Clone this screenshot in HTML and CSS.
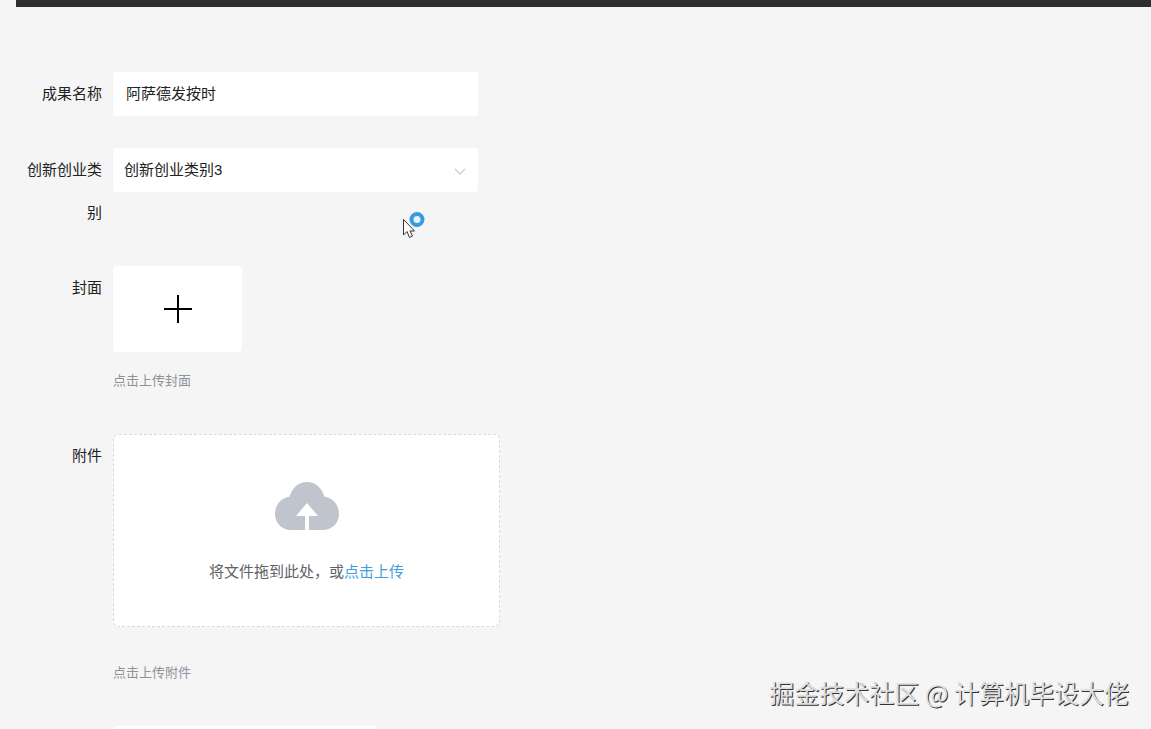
FILE: index.html
```
<!DOCTYPE html>
<html lang="zh-CN">
<head>
    <meta charset="utf-8">
    <title>成果名称</title>
    <link rel="stylesheet" href="styles.css">
</head>
<body>
    <div class="top-bar"></div>

    <form class="edit-form">
        <div class="form-item">
            <label class="form-label" for="name">成果名称</label>
            <div class="form-content">
                <input class="text-input" type="text" id="name" value="阿萨德发按时">
            </div>
        </div>

        <div class="form-item">
            <label class="form-label" for="type">创新创业类别</label>
            <div class="form-content">
                <div class="select-box">
                    <select id="type">
                        <option>创新创业类别3</option>
                    </select>
                    <svg class="select-arrow" width="12" height="8" viewBox="0 0 12 8">
                        <path d="M1 1l5 5 5-5" fill="none" stroke="#c8cacf" stroke-width="1.2"/>
                    </svg>
                </div>
            </div>
        </div>

        <div class="form-item">
            <label class="form-label" for="cover">封面</label>
            <div class="form-content">
                <button class="cover-upload" type="button" id="cover" aria-label="封面">
                    <svg width="28" height="28" viewBox="0 0 28 28">
                        <path d="M14 0v28M0 14h28" fill="none" stroke="#000" stroke-width="2"/>
                    </svg>
                </button>
                <div class="tip">点击上传封面</div>
            </div>
        </div>

        <div class="form-item">
            <label class="form-label" for="file">附件</label>
            <div class="form-content">
                <div class="drag-upload">
                    <svg width="64" height="48" viewBox="0 0 64 48">
                        <path d="M16 48C7 48 0 41 0 32C0 23 6 16 14.500 14.800C17 6 23.500 0 32 0S47 6 49.500 14.800C58 16 64 23 64 32C64 41 57 48 48 48H34V34H43L32 21 21 34H30V48Z" fill="#c0c4cc"/>
                    </svg>
                    <div class="drag-text">将文件拖到此处，或<button class="upload-link" type="button" id="file">点击上传</button></div>
                </div>
                <div class="tip file-tip">点击上传附件</div>
            </div>
        </div>

        <div class="form-item">
            <div class="form-content">
                <textarea class="text-area" aria-label="内容"></textarea>
            </div>
        </div>
    </form>

    <svg class="pointer" width="24" height="28" viewBox="0 0 24 28">
        <circle cx="14" cy="7.500" r="5.500" fill="#dff4ff" stroke="#3b9add" stroke-width="4"/>
        <path d="M.500 7.500V23l3.500-3.500 2.500 6 3-1.500-2.500-5h4.500z" fill="#fff" stroke="#333" stroke-width="1"/>
    </svg>

    <div class="watermark">掘金技术社区 @ 计算机毕设大佬</div>
</body>
</html>
```

FILE: styles.css
```
* {
    box-sizing: border-box;
}

body {
    margin: 0;
    height: 100vh;
    overflow: hidden;
    background-color: #f5f5f6;
    font-family: "Liberation Sans", "Noto Sans CJK SC", sans-serif;
    font-size: 15px;
    color: #222;
}

button, input, select, textarea {
    font: inherit;
    color: inherit;
    border: none;
    outline: none;
}

.top-bar {
    height: 7px;
    margin-left: 16px;
    background-color: #302f2d;
}

.edit-form {
    display: flex;
    flex-direction: column;
    gap: 32px;
    padding: 65px 16px 0;
}

.form-item {
    display: grid;
    grid-template-columns: 97px 1fr;
}

.form-label {
    padding-right: 11px;
    line-height: 43px;
    text-align: right;
}

.form-content {
    grid-column: 2;
}

.text-input {
    display: block;
    width: 365px;
    max-width: 100%;
    height: 44px;
    padding: 0 13px 4px;
    background-color: #fff;
    border-radius: 2px;
}

.select-box {
    position: relative;
    width: 365px;
    max-width: 100%;
}

.select-box select {
    display: block;
    width: 100%;
    height: 44px;
    padding: 0 11px 2px;
    appearance: none;
    background-color: #fff;
    border-radius: 4px;
}

.select-arrow {
    position: absolute;
    right: 12px;
    top: 20px;
}

.cover-upload {
    display: flex;
    align-items: center;
    justify-content: center;
    width: 129px;
    height: 86px;
    padding: 0;
    background-color: #fff;
    border-radius: 4px;
    cursor: pointer;
}

.tip {
    margin-top: 7px;
    font-size: 13px;
    line-height: 43px;
    color: #8f9399;
}

.file-tip {
    margin-top: 24px;
}

.drag-upload {
    display: flex;
    flex-direction: column;
    align-items: center;
    gap: 20px;
    width: 387px;
    max-width: 100%;
    height: 193px;
    padding-top: 47px;
    background-color: #fff;
    border: 1px dashed #d9d9d9;
    border-radius: 6px;
}

.drag-text {
    line-height: 43px;
    color: #606266;
}

.upload-link {
    padding: 0;
    background: none;
    color: #409edc;
    cursor: pointer;
}

.text-area {
    display: block;
    width: 265px;
    height: 120px;
    background-color: #fff;
    border-radius: 4px;
    resize: none;
}

.pointer {
    position: absolute;
    left: 403px;
    top: 212px;
}

.watermark {
    position: absolute;
    right: 22px;
    bottom: 19px;
    font-family: "Noto Sans CJK SC", sans-serif;
    font-size: 25px;
    line-height: 36px;
    color: #dedede;
    text-shadow: 1px 1px 0 #333;
}
```
